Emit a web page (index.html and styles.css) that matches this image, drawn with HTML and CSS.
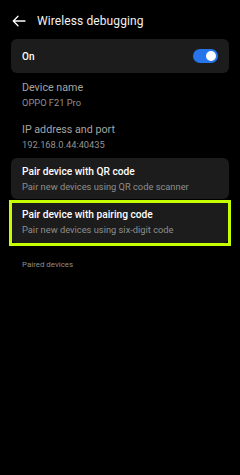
FILE: index.html
```html
<!DOCTYPE html>
<html>
<head>
<meta charset="utf-8">
<link rel="stylesheet" href="styles.css">
</head>
<body>
<div class="screen">
  <header class="header">
    <svg class="back" width="14" height="12" viewBox="0 0 14 12">
      <path d="M13 6H1.5M6 1.3L1.3 6L6 10.7" fill="none" stroke="#fff" stroke-width="1.3" stroke-linecap="round" stroke-linejoin="round"/>
    </svg>
    <h1 class="title">Wireless debugging</h1>
  </header>

  <div class="card switch-card">
    <span class="switch-label">On</span>
    <span class="toggle"><span class="knob"></span></span>
  </div>

  <div class="info first">
    <div class="info-title">Device name</div>
    <div class="info-sub">OPPO F21 Pro</div>
  </div>
  <div class="info second">
    <div class="info-title">IP address and port</div>
    <div class="info-sub">192.168.0.44:40435</div>
  </div>

  <div class="card item qr">
    <div class="item-title">Pair device with QR code</div>
    <div class="item-sub">Pair new devices using QR code scanner</div>
  </div>
  <div class="card item code highlighted">
    <div class="item-title">Pair device with pairing code</div>
    <div class="item-sub">Pair new devices using six-digit code</div>
  </div>

  <div class="section">Paired devices</div>
</div>
</body>
</html>
```

FILE: styles.css
```css
html, body {
  margin: 0;
  padding: 0;
  background: #000;
}
body {
  width: 240px;
  height: 475px;
  overflow: hidden;
  font-family: Roboto, "Noto Sans", sans-serif;
  color: #fff;
}
.screen {
  display: flex;
  flex-direction: column;
}
.header {
  height: 36px;
  padding-top: 3px;
  display: flex;
  align-items: center;
  box-sizing: content-box;
}
.back {
  margin-left: 12px;
  width: 14px;
  height: 12px;
}
.title {
  margin: 0 0 0 11px;
  font-size: 12px;
  font-weight: 400;
  color: #f2f2f2;
  letter-spacing: 0.1px;
}
.card {
  margin: 0 11px;
  background: #1c1c1c;
  border-radius: 6px;
}
.switch-card {
  height: 34px;
  padding: 0 11px;
  display: flex;
  align-items: center;
  justify-content: space-between;
}
.switch-label {
  font-size: 10px;
  font-weight: 500;
  color: #fff;
}
.toggle {
  width: 25px;
  height: 14px;
  border-radius: 7px;
  background: #2675eb;
  display: flex;
  align-items: center;
  justify-content: flex-end;
  padding-right: 2px;
  box-sizing: border-box;
}
.knob {
  width: 10px;
  height: 10px;
  border-radius: 50%;
  background: #fff;
}
.info {
  padding-left: 22px;
}
.info.first {
  margin-top: 7px;
}
.info.second {
  margin-top: 11px;
}
.info-title {
  font-size: 10.7px;
  line-height: 15px;
  color: #a4a4a4;
}
.info-sub {
  font-size: 9.3px;
  line-height: 16px;
  color: #939393;
}
.item {
  position: relative;
  padding: 7px 11px 4px;
}
.item.qr {
  margin-top: 5px;
}
.item.code {
  margin-top: 2px;
  padding-bottom: 5px;
}
.item-title {
  font-size: 10.2px;
  font-weight: 500;
  line-height: 14px;
  color: #fff;
}
.item-sub {
  font-size: 9.3px;
  line-height: 16px;
  color: #8e8e8e;
}
.highlighted::after {
  content: "";
  position: absolute;
  left: -2px;
  right: -2px;
  top: -1px;
  bottom: -3px;
  border: 3px solid #c6ff00;
}
.section {
  margin-top: 16px;
  padding-left: 22px;
  font-size: 7.9px;
  line-height: 12px;
  color: #8e8e8e;
}
```
